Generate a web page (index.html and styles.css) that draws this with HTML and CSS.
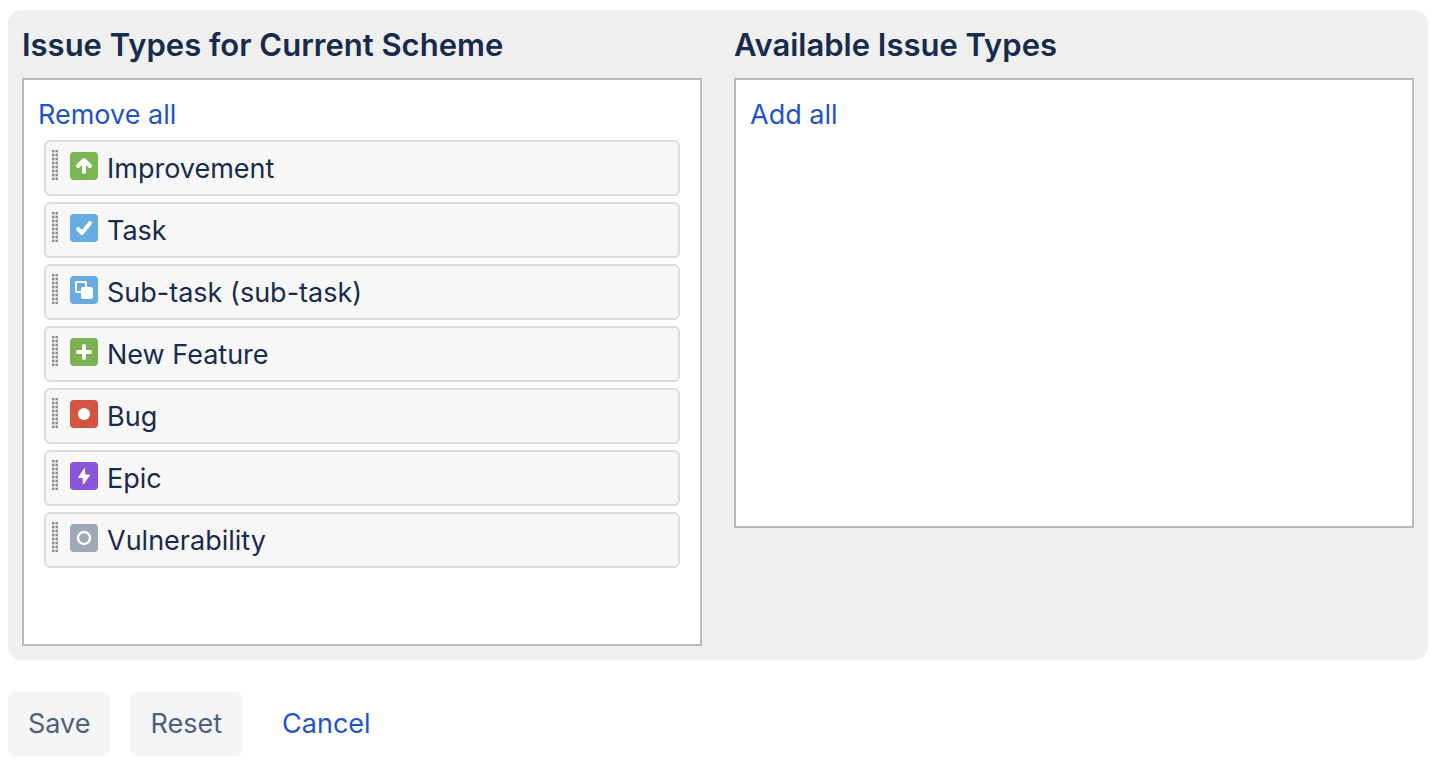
FILE: index.html
```html
<!DOCTYPE html>
<html lang="en">
<head>
    <meta charset="UTF-8">
    <meta name="viewport" content="width=device-width, initial-scale=1.0">
    <title>Modify Issue Type Scheme</title>
    <link rel="stylesheet" href="styles.css">
</head>
<body>
    <form id="scheme-form">
        <div class="scheme-panel">
            <section class="scheme-column">
                <h2>Issue Types for Current Scheme</h2>
                <div class="type-box current">
                    <a href="#" class="bulk-link">Remove all</a>
                    <ul class="type-list">
                        <li class="type-item" draggable="true">
                            <span class="grip"></span>
                            <svg class="type-icon" viewBox="0 0 28 28" aria-hidden="true">
                                <rect width="28" height="28" rx="4" fill="#7ab651"/>
                                <path d="M14 20V9M8 14l6-6 6 6" fill="none" stroke="#fff" stroke-width="4" stroke-linecap="round" stroke-linejoin="round"/>
                            </svg>
                            <span>Improvement</span>
                        </li>
                        <li class="type-item" draggable="true">
                            <span class="grip"></span>
                            <svg class="type-icon" viewBox="0 0 28 28" aria-hidden="true">
                                <rect width="28" height="28" rx="4" fill="#67abe2"/>
                                <path d="M8 15l4 4 8-10" fill="none" stroke="#fff" stroke-width="4" stroke-linecap="round" stroke-linejoin="round"/>
                            </svg>
                            <span>Task</span>
                        </li>
                        <li class="type-item" draggable="true">
                            <span class="grip"></span>
                            <svg class="type-icon" viewBox="0 0 28 28" aria-hidden="true">
                                <rect width="28" height="28" rx="4" fill="#67abe2"/>
                                <rect x="6" y="6" width="10" height="10" rx="1" fill="none" stroke="#fff" stroke-width="2"/>
                                <rect x="11" y="11" width="12" height="12" rx="2" fill="#fff"/>
                            </svg>
                            <span>Sub-task (sub-task)</span>
                        </li>
                        <li class="type-item" draggable="true">
                            <span class="grip"></span>
                            <svg class="type-icon" viewBox="0 0 28 28" aria-hidden="true">
                                <rect width="28" height="28" rx="4" fill="#7cb154"/>
                                <path d="M14 8v12M8 14h12" stroke="#fff" stroke-width="4" stroke-linecap="round"/>
                            </svg>
                            <span>New Feature</span>
                        </li>
                        <li class="type-item" draggable="true">
                            <span class="grip"></span>
                            <svg class="type-icon" viewBox="0 0 28 28" aria-hidden="true">
                                <rect width="28" height="28" rx="4" fill="#d35440"/>
                                <circle cx="14" cy="14" r="6" fill="#fff"/>
                            </svg>
                            <span>Bug</span>
                        </li>
                        <li class="type-item" draggable="true">
                            <span class="grip"></span>
                            <svg class="type-icon" viewBox="0 0 28 28" aria-hidden="true">
                                <rect width="28" height="28" rx="4" fill="#8855d8"/>
                                <path d="M14.5 6.5L8.5 15.5h4.5l.3 6.5 6.5-9h-5z" fill="#fff" stroke="#fff" stroke-width="1" stroke-linejoin="round"/>
                            </svg>
                            <span>Epic</span>
                        </li>
                        <li class="type-item" draggable="true">
                            <span class="grip"></span>
                            <svg class="type-icon" viewBox="0 0 28 28" aria-hidden="true">
                                <rect width="28" height="28" rx="4" fill="#a1a8b5"/>
                                <circle cx="14" cy="14" r="6" fill="none" stroke="#fff" stroke-width="2.4"/>
                            </svg>
                            <span>Vulnerability</span>
                        </li>
                    </ul>
                </div>
            </section>
            <section class="scheme-column">
                <h2>Available Issue Types</h2>
                <div class="type-box">
                    <a href="#" class="bulk-link">Add all</a>
                    <ul class="type-list"></ul>
                </div>
            </section>
        </div>
        <div class="form-actions">
            <button type="submit">Save</button>
            <button type="reset">Reset</button>
            <a href="#">Cancel</a>
        </div>
    </form>
</body>
</html>
```

FILE: styles.css
```css
:root {
    --text-color: #172b4d;
    --link-color: #1f53c9;
    --panel-bg: #efefef;
}

* {
    box-sizing: border-box;
}

body {
    font-family: Inter, "Liberation Sans", sans-serif;
    font-size: 27px;
    line-height: 38px;
    color: var(--text-color);
    background-color: #fff;
    margin: 0;
    padding: 10px 12px 10px 8px;
}

a {
    color: var(--link-color);
    text-decoration: none;
}

a:hover {
    text-decoration: underline;
}

.scheme-panel {
    display: grid;
    grid-template-columns: 1fr 1fr;
    align-items: start;
    gap: 32px;
    padding: 16px 14px 14px;
    background-color: var(--panel-bg);
    border-radius: 14px;
}

h2 {
    margin: 0 0 14px;
    font-size: 31px;
    line-height: 38px;
    font-weight: 600;
}

.type-box {
    min-height: 450px;
    padding: 16px 14px;
    background-color: #fff;
    border: 2px solid #b9b9b9;
}

.type-box.current {
    padding-bottom: 76px;
}

.bulk-link {
    display: inline-block;
    vertical-align: top;
}

.type-list {
    display: flex;
    flex-direction: column;
    gap: 6px;
    list-style: none;
    margin: 6px 6px 0;
    padding: 0;
}

.type-item {
    display: flex;
    align-items: flex-start;
    height: 56px;
    padding: 8px 6px;
    background-color: #f7f7f7;
    border: 2px solid #dcdcdc;
    border-radius: 6px;
    cursor: move;
}

/* two columns of small dots */
.grip {
    width: 6px;
    height: 30px;
    margin-right: 12px;
    background:
        linear-gradient(90deg, transparent 2px, rgba(247,247,247,0.5) 2px, rgba(247,247,247,0.5) 4px, transparent 4px),
        repeating-linear-gradient(#8c8c8c 0, #8c8c8c 2px, #d0d0d0 2px, #d0d0d0 4px);
}

.type-icon {
    width: 28px;
    height: 28px;
    margin: 2px 9px 0 0;
}

.form-actions {
    display: flex;
    align-items: center;
    gap: 20px;
    margin-top: 32px;
}

button {
    height: 64px;
    padding: 0 20px;
    font: inherit;
    color: #505f79;
    background-color: #f4f5f7;
    border: none;
    border-radius: 6px;
    cursor: pointer;
}

button:hover {
    background-color: #ebecf0;
}

.form-actions a {
    margin-left: 20px;
}
```
